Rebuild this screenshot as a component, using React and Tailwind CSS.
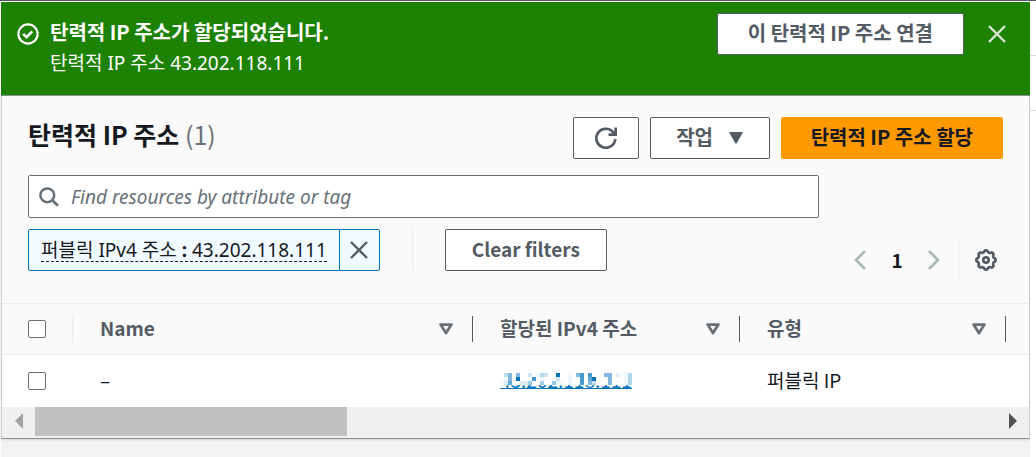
const outlineButton =
  "flex h-[42px] items-center justify-center rounded-[2px] border border-[#545b64] bg-white pb-[3px] font-bold text-[#545b64]";

function CheckIcon() {
  return (
    <svg viewBox="0 0 22 22" className="size-[22px]" fill="none" stroke="currentColor" strokeWidth="2.2" aria-hidden="true">
      <circle cx="11" cy="11" r="9.6" />
      <path d="M6.2 10.8l3.3 3.3 5.8-5.8" strokeWidth="2.6" />
    </svg>
  );
}

function CloseIcon() {
  return (
    <svg viewBox="0 0 18 18" className="size-[18px]" fill="none" stroke="currentColor" strokeWidth="2.4" aria-hidden="true">
      <path d="M1 1l16 16M17 1L1 17" />
    </svg>
  );
}

function RefreshIcon() {
  return (
    <svg viewBox="0 0 22 22" className="size-[22px]" fill="none" stroke="currentColor" strokeWidth="2.7" aria-hidden="true">
      <path d="M20.300 12A9.500 9.500 0 1 1 17.600 4.600L20 7" />
      <path d="M20.700 0.500v7.200h-7.200" />
    </svg>
  );
}

function SearchIcon() {
  return (
    <svg viewBox="0 0 20 20" className="size-5" fill="none" stroke="currentColor" strokeWidth="2.5" aria-hidden="true">
      <circle cx="8.3" cy="8.3" r="6.9" />
      <path d="M13.2 13.2l5.8 5.6" strokeWidth="2.8" />
    </svg>
  );
}

function ChevronIcon({ d }) {
  return (
    <svg viewBox="0 0 12 20" className="h-5 w-3" fill="none" stroke="currentColor" strokeWidth="2.6" aria-hidden="true">
      <path d={d} />
    </svg>
  );
}

const gearOutline = Array.from({ length: 96 }, (_, i) => {
  const angle = (i / 96) * Math.PI * 2;
  const radius = 8.8 + Math.max(-0.8, Math.min(0.8, Math.cos(angle * 8) * 1.2));
  return `${(11 + radius * Math.cos(angle)).toFixed(2)},${(11 + radius * Math.sin(angle)).toFixed(2)}`;
}).join(" ");

function GearIcon() {
  return (
    <svg viewBox="0 0 22 22" className="size-[22px]" fill="none" stroke="currentColor" strokeWidth="2.7" strokeLinejoin="round" aria-hidden="true">
      <polygon points={gearOutline} />
      <circle cx="11" cy="11" r="2.7" />
    </svg>
  );
}

function SortIcon() {
  return (
    <svg viewBox="0 0 14 12" className="h-3 w-3.5" fill="none" stroke="#687078" strokeWidth="2.8" strokeLinejoin="round" aria-hidden="true">
      <path d="M1.600 1.600h10.800L7 10z" />
    </svg>
  );
}

function HeaderCell({ label }) {
  return (
    <th scope="col" className="h-[51px] p-0 font-bold">
      <div className="flex h-[26px] items-center justify-between border-r border-[#545b64] pl-[27px] pr-[19px]">
        <span className="pb-[3px]">{label}</span>
        <button type="button" aria-label={`${label} 정렬`}>
          <SortIcon />
        </button>
      </div>
    </th>
  );
}

const mosaic = [
  [1, 0, "#bcdcf0"], [2, 0, "#84b9de"], [4, 0, "#84b9de"], [7, 0, "#d0e5f4"], [9, 0, "#f0f7fc"], [10, 0, "#bbd8ec"], [11, 0, "#c7dff0"], [14, 0, "#0073bb"], [17, 0, "#eef6fc"], [19, 0, "#84b9de"], [20, 0, "#4698ce"], [22, 0, "#4698ce"], [26, 0, "#84b9de"], [27, 0, "#84b9de"], [29, 0, "#e2eff8"], [31, 0, "#eef6fc"], [32, 0, "#b4d6ec"],
  [1, 1, "#f0f7fc"], [2, 1, "#84b9de"], [4, 1, "#0073bb"], [8, 1, "#4698ce"], [10, 1, "#eef6fc"], [14, 1, "#d0e5f4"], [17, 1, "#eef6fc"], [20, 1, "#4698ce"], [22, 1, "#65a9d6"], [23, 1, "#0073bb"], [27, 1, "#84b9de"], [31, 1, "#f0f7fc"], [32, 1, "#b4d6ec"],
  [0, 2, "#f0f7fc"], [1, 2, "#dcecf7"], [2, 2, "#65a9d6"], [5, 2, "#dcecf7"], [6, 2, "#dcecf7"], [7, 2, "#a5cee8"], [10, 2, "#a5cee8"], [13, 2, "#9ac7e5"], [14, 2, "#eef6fc"], [15, 2, "#eef6fc"], [17, 2, "#eef6fc"], [20, 2, "#4698ce"], [22, 2, "#84b9de"], [23, 2, "#c7dff0"], [27, 2, "#84b9de"], [31, 2, "#f0f7fc"], [32, 2, "#b4d6ec"],
];

function Checkbox({ label }) {
  return (
    <input
      type="checkbox"
      aria-label={label}
      className="block size-[18px] appearance-none rounded-[2px] border border-[#687078] bg-white checked:bg-[#0073bb]"
    />
  );
}

export default function App() {
  return (
    <div className="flex min-h-screen flex-col border-t border-[#545b64] bg-white pl-px pt-px font-['Noto_Sans_CJK_KR','Noto_Sans',sans-serif] text-[19px] leading-7 text-[#16191f]">
      <div className="flex flex-1">
        <main className="flex min-w-0 flex-1 flex-col bg-[#f2f3f3]">
          <section role="status" className="flex h-[94px] shrink-0 items-start border-b border-[#879596] bg-[#1d8102] pl-4 pr-6 pt-[11px] text-white">
            <div className="pt-[10px]">
              <CheckIcon />
            </div>
            <div className="flex-1 pl-[11px] pt-1">
              <h2 className="text-[20px] font-bold leading-[30px]">탄력적 IP 주소가 할당되었습니다.</h2>
              <p className="font-['Noto_Sans','Noto_Sans_CJK_KR',sans-serif] leading-8">탄력적 IP 주소 43.202.118.111</p>
            </div>
            <button type="button" className={`${outlineButton} px-[30px] text-[20px]`}>
              이 탄력적 IP 주소 연결
            </button>
            <button type="button" aria-label="닫기" className="ml-6 mt-3 text-[#dbe8d8]">
              <CloseIcon />
            </button>
          </section>

          <section className="border-x border-b border-x-[#c8cccd] border-b-[#879596] bg-[#fafafa] shadow-sm">
            <div className="px-[26px] pt-[21px]">
              <header className="flex items-center">
                <h1 className="flex-1 pb-2 text-[25px] font-bold">
                  탄력적 IP 주소 <span className="font-normal text-[#687078]">(1)</span>
                </h1>
                <div className="flex gap-[11px]">
                  <button type="button" aria-label="새로 고침" className={`${outlineButton} w-[66px]`}>
                    <span className="pt-[3px]">
                      <RefreshIcon />
                    </span>
                  </button>
                  <button type="button" className={`${outlineButton} w-[120px] gap-4 text-[20px]`}>
                    작업
                    <svg viewBox="0 0 14 12" className="mt-[3px] h-3 w-3.5" fill="currentColor" aria-hidden="true">
                      <path d="M1 0h12q1 0 .5 1L7.600 11.500h-1.200L.5 1Q0 0 1 0z" />
                    </svg>
                  </button>
                  <button type="button" className="h-[42px] rounded-[2px] bg-[#ff9900] px-[30px] pb-[3px] text-[20px] font-bold text-[#16191f]">
                    탄력적 IP 주소 할당
                  </button>
                </div>
              </header>

              <div className="mr-[184px] mt-4 flex h-[43px] items-center gap-3 rounded-[2px] border border-[#687078] bg-white pl-[10px] text-[#687078]">
                <SearchIcon />
                <input
                  type="search"
                  aria-label="Find resources by attribute or tag"
                  placeholder="Find resources by attribute or tag"
                  className="min-w-0 flex-1 bg-transparent font-['Noto_Sans'] italic outline-none placeholder:text-[#687078]"
                />
              </div>

              <div className="flex items-start justify-between pb-[22px] pt-[11px]">
                <div className="flex h-[42px] items-stretch">
                  <div className="flex rounded-[2px] border border-[#0073bb] bg-[#f1faff]">
                    <div className="flex items-center px-3">
                      <button type="button" className="border-b border-dashed border-[#16191f] font-['Noto_Sans','Noto_Sans_CJK_KR',sans-serif] leading-[22px]">
                        퍼블릭 IPv4 주소 <b>:</b> 43.202.118.111
                      </button>
                    </div>
                    <button type="button" aria-label="필터 제거" className="flex w-10 items-center justify-center border-l border-[#0073bb] text-[#545b64]">
                      <CloseIcon />
                    </button>
                  </div>
                  <div className="ml-8 border-l border-[#eaeded] pl-8">
                    <button type="button" className={`${outlineButton} w-[162px]`}>
                      Clear filters
                    </button>
                  </div>
                </div>
                <div className="mt-[10px] flex h-[42px] items-center">
                  <button type="button" aria-label="이전" className="text-[#aab7b8]">
                    <ChevronIcon d="M11 1L2 10l9 9" />
                  </button>
                  <button type="button" className="w-[62px] font-bold">1</button>
                  <button type="button" aria-label="다음" className="text-[#aab7b8]">
                    <ChevronIcon d="M1 1l9 9-9 9" />
                  </button>
                  <div className="ml-[18px] flex h-full items-center border-l border-[#eaeded] pl-4 pr-[6px]">
                    <button type="button" aria-label="기본 설정" className="text-[#545b64]">
                      <GearIcon />
                    </button>
                  </div>
                </div>
              </div>
            </div>

            <table className="w-full table-fixed border-collapse text-left">
              <colgroup>
                <col className="w-[71px]" />
                <col />
                <col className="w-[267px]" />
                <col className="w-[266px]" />
                <col className="w-[23px]" />
              </colgroup>
              <thead className="border-y border-[#eaeded] text-[#545b64]">
                <tr>
                  <th scope="col" className="p-0">
                    <div className="flex h-[26px] items-center border-r border-[#eaeded] pl-[26px]">
                      <Checkbox label="모두 선택" />
                    </div>
                  </th>
                  <HeaderCell label="Name" />
                  <HeaderCell label="할당된 IPv4 주소" />
                  <HeaderCell label="유형" />
                  <th className="p-0" />
                </tr>
              </thead>
              <tbody className="bg-white">
                <tr className="h-[52px]">
                  <td className="p-0 pl-[26px]">
                    <Checkbox label="43.202.118.111 선택" />
                  </td>
                  <td className="p-0 pb-[2px] pl-[27px]">–</td>
                  <td className="p-0 pl-[27px]">
                    <a href="#address" className="relative block w-fit border-b border-[#0073bb] leading-4 text-[#0073bb]">
                      43.202.118.111
                      <svg viewBox="0 0 136 14" className="absolute left-0 top-0 h-[14px] w-[136px]" shapeRendering="crispEdges" aria-hidden="true">
                        <path d="M0 0h136v13H0z" fill="#fff" />
                        {mosaic.map(([x, y, fill]) => (
                          <rect key={`${x}-${y}`} x={x * 4} y={1 + y * 4} width="4" height="4" fill={fill} />
                        ))}
                      </svg>
                    </a>
                  </td>
                  <td className="p-0 pb-[2px] pl-[27px]">퍼블릭 IP</td>
                  <td className="p-0" />
                </tr>
              </tbody>
            </table>

            <div className="flex h-[31px] items-start bg-[#f0f0f0]">
              <button type="button" aria-label="왼쪽으로 스크롤" className="flex h-[29px] w-[33px] items-center justify-center text-[#a3a3a3]">
                <svg viewBox="0 0 8 16" className="h-4 w-2" fill="currentColor" aria-hidden="true">
                  <path d="M8 0v16L0 8z" />
                </svg>
              </button>
              <div className="h-[29px] flex-1">
                <div className="h-full w-[32.5%] bg-[#c1c1c1]" />
              </div>
              <button type="button" aria-label="오른쪽으로 스크롤" className="flex h-[29px] w-[33px] items-center justify-center text-[#505050]">
                <svg viewBox="0 0 8 16" className="h-4 w-2" fill="currentColor" aria-hidden="true">
                  <path d="M0 0v16l8-8z" />
                </svg>
              </button>
            </div>
          </section>
        </main>
        <aside className="w-[6px] shrink-0 bg-white">
          <div className="h-[54px] border-b border-[#d5dbdb]" />
          <div className="h-[55px] border-b border-[#d5dbdb]" />
        </aside>
      </div>
    </div>
  );
}
